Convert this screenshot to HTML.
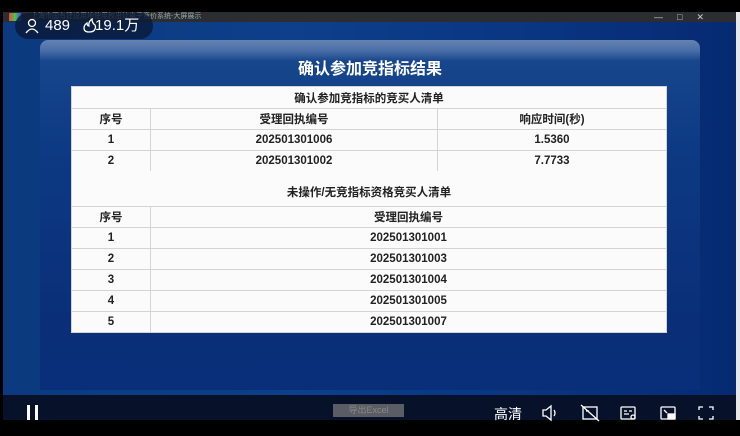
<!DOCTYPE html>
<html><head><meta charset="utf-8"><style>
*{margin:0;padding:0;box-sizing:border-box}
body{width:740px;height:436px;background:#000;position:relative;overflow:hidden;font-family:"Liberation Sans","Noto Sans CJK SC",sans-serif}
.bg{position:absolute;left:3px;top:22px;width:733px;height:373px;background:linear-gradient(90deg,#0b3a7e 0%,#0d3f8a 40%,#0a3682 70%,#062a72 100%)}
.panel{position:absolute;left:40px;top:40px;width:660px;height:350px;border-radius:8px 8px 0 0;background:linear-gradient(180deg,#6583b2 0%,#4a6ea8 3%,#17468c 6%,#0d3a84 30%,#0a2f78 80%,#0a2f7a 100%)}
.titlebar{position:absolute;left:3px;top:12px;width:733px;height:10px;background:#2b2d31;color:#9aa;font-size:7px;line-height:10px;padding-left:28px}
.right{position:absolute;left:736px;top:12px;width:4px;height:408px;background:#e8e8e8}
.pill{position:absolute;left:15px;top:13px;width:138px;height:26px;border-radius:13px;background:rgba(10,25,55,.8);color:#fff;font-size:15px;line-height:26px;padding-left:30px}
h1{position:absolute;left:40px;top:55px;width:660px;text-align:center;color:#fff;font-size:16px;font-weight:bold}
table{position:absolute;left:71px;border-collapse:collapse;background:#fbfbfb;font-size:11.5px;font-weight:bold;color:#222}
td{border:1px solid #d4d4d4;text-align:center;height:21px;padding:0}
.t1{top:86px;width:596px}
.t2{top:171px;width:596px}
.ctrl{position:absolute;left:3px;top:395px;width:733px;height:25px;background:#07122a}
.btn{position:absolute;left:333px;top:404px;width:71px;height:13px;background:#5a5d63;color:#888;font-size:9px;text-align:center;line-height:13px}
.ic{position:absolute;top:404px;color:#fff}
</style></head><body>
<div class="bg"></div>
<div class="titlebar"><span style="position:absolute;left:6px;top:1px;width:12px;height:8px;background:linear-gradient(90deg,#e44,#4c4,#44e)"></span>上海市国有建设用地使用权出让电子竞价系统-大屏展示<span style="position:absolute;right:18px;color:#ccc;font-size:9px;letter-spacing:14px">—□✕</span></div>
<div class="right"></div>
<div class="panel"></div>
<div class="pill">489 &nbsp;&nbsp;&nbsp;&nbsp;&nbsp;19.1万</div>
<svg style="position:absolute;left:25px;top:18px" width="90" height="16" fill="none" stroke="#fff" stroke-width="1.3">
<circle cx="7" cy="5" r="3.5"/><path d="M1 15q6-8 12 0"/>
<path d="M64 14q-5 0-5-4q0-3 3-5q0 3 2 3q-1-4 3-7q0 4 3 6q1 2 0 4q-1 3-6 3z"/>
</svg>
<h1>确认参加竞指标结果</h1>
<table class="t1">
<tr><td colspan="3" style="height:22px">确认参加竞指标的竞买人清单</td></tr>
<tr><td style="width:79px">序号</td><td style="width:287px">受理回执编号</td><td>响应时间(秒)</td></tr>
<tr><td>1</td><td>202501301006</td><td>1.5360</td></tr>
<tr><td>2</td><td>202501301002</td><td>7.7733</td></tr>
</table>
<table class="t2">
<tr><td colspan="2" style="height:35px;border-top:none;vertical-align:bottom;padding-bottom:6px">未操作/无竞指标资格竞买人清单</td></tr>
<tr><td style="width:79px">序号</td><td>受理回执编号</td></tr>
<tr><td>1</td><td>202501301001</td></tr>
<tr><td>2</td><td>202501301003</td></tr>
<tr><td>3</td><td>202501301004</td></tr>
<tr><td>4</td><td>202501301005</td></tr>
<tr><td>5</td><td>202501301007</td></tr>
</table>
<div class="ctrl"></div>
<div style="position:absolute;left:27px;top:405px;width:3px;height:15px;background:#fff"></div>
<div style="position:absolute;left:35px;top:405px;width:3px;height:15px;background:#fff"></div>
<div class="btn">导出Excel</div>
<div class="ic" style="left:494px;top:404px;font-size:14px">高清</div>
<svg class="ic" style="left:540px" width="200" height="18" fill="none" stroke="#fff" stroke-width="1.3">
<path d="M3 6h3l5-4v14l-5-4H3z M14 6q2 3 0 6"/>
<rect x="43" y="3" width="14" height="12"/><path d="M41 1l18 16M46 7h3"/>
<rect x="81" y="3" width="14" height="12" rx="1"/><path d="M84 7h3M89 7h3M84 10h5"/><circle cx="93" cy="13" r="2"/>
<rect x="121" y="3" width="14" height="12" rx="1"/><rect x="128" y="10" width="7" height="5" fill="#fff"/><path d="M124 6l3 3"/>
<path d="M159 6V3h4M169 3h4v3M173 12v3h-4M163 15h-4v-3"/>
</svg>
</body></html>
